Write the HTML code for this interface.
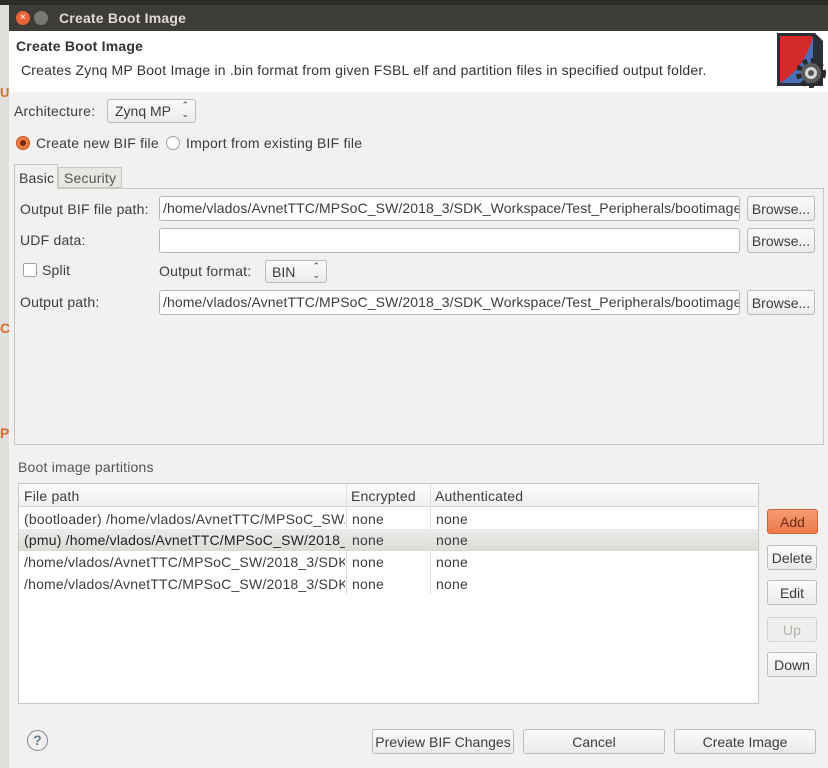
<!DOCTYPE html>
<html><head><meta charset="utf-8"><style>
*{box-sizing:border-box;margin:0;padding:0}
body{width:828px;height:768px;overflow:hidden;background:#f2f1f0;font-family:"Liberation Sans","DejaVu Sans",sans-serif;font-size:14px;letter-spacing:0.2px;color:#3c3c3c;position:relative}
.a{position:absolute;white-space:nowrap}
.btn{position:absolute;border:1px solid #bdbbb6;border-radius:3px;background:linear-gradient(#fbfbfa,#ecebe9);text-align:center;color:#3c3c3c;font-size:14px;letter-spacing:0}
.inp{position:absolute;background:#fff;border:1px solid #b8b6b2;border-radius:3px;padding:3px 3px;overflow:hidden;font-size:14px;letter-spacing:0.1px}
</style></head><body>
<div class="a" style="left:0;top:0;width:828px;height:5px;background:#2c2b28"></div>
<div class="a" style="left:0;top:5px;width:9px;height:763px;background:#e0dfdc"></div>
<div class="a" style="left:0;top:85px;width:9px;height:14px;color:#e06a2c;font-weight:bold;font-size:13px">U</div>
<div class="a" style="left:0;top:320px;width:9px;color:#e06a2c;font-weight:bold">C</div>
<div class="a" style="left:0;top:425px;width:9px;color:#e06a2c;font-weight:bold">P</div>
<div class="a" style="left:9px;top:5px;width:819px;height:26px;background:#3d3c38"></div>
<div class="a" style="left:16px;top:11px;width:14px;height:14px;border-radius:7px;background:#e8643a;color:#fff;font-size:10px;text-align:center;line-height:14px">×</div>
<div class="a" style="left:34px;top:11px;width:14px;height:14px;border-radius:7px;background:#7a7872"></div>
<div class="a" style="left:59px;top:10px;color:#dfdbd2;font-weight:bold;font-size:14px">Create Boot Image</div>
<div class="a" style="left:9px;top:31px;width:819px;height:61px;background:#fff"></div>
<div class="a" style="left:16px;top:38px;font-weight:bold;font-size:14px;color:#333">Create Boot Image</div>
<div class="a" style="left:21px;top:62px;color:#333">Creates Zynq MP Boot Image in .bin format from given FSBL elf and partition files in specified output folder.</div>
<svg class="a" style="left:776px;top:32px" width="52" height="56" viewBox="0 0 52 56">
<path d="M1 1h38l8 8v45H1z" fill="#2a3038"/>
<path d="M4 4h33v47H4z" fill="#d52a2a"/>
<path d="M37 4v47H4C22 40 33 22 37 4z" fill="#4a6fb8"/>
<circle cx="35" cy="41" r="12" fill="none" stroke="#2a2a2a" stroke-width="6" stroke-dasharray="4.5 3.5"/>
<circle cx="35" cy="41" r="10" fill="#5a5a5a"/>
<circle cx="35" cy="41" r="6" fill="#d8d8d8"/>
<circle cx="35" cy="41" r="3" fill="#555"/>
</svg>
<div class="a" style="left:14px;top:103px">Architecture:</div>
<div class="btn" style="left:107px;top:99px;width:89px;height:24px;text-align:left;padding:3px 7px">Zynq MP<span style="position:absolute;right:6px;top:1px;font-size:9px;line-height:9px">⌃<br>⌄</span></div>
<div class="a" style="left:16px;top:136px;width:14px;height:14px;border-radius:7px;border:1px solid #c2531f;background:#ef7d4a"><div style="margin:3px;width:6px;height:6px;border-radius:3px;background:#7a2a0a"></div></div>
<div class="a" style="left:36px;top:135px">Create new BIF file</div>
<div class="a" style="left:166px;top:136px;width:14px;height:14px;border-radius:7px;border:1px solid #a5a39f;background:#fff"></div>
<div class="a" style="left:186px;top:135px">Import from existing BIF file</div>
<div class="a" style="left:14px;top:188px;width:810px;height:257px;border:1px solid #c9c7c3;background:#f2f1f0"></div>
<div class="a" style="left:14px;top:164px;width:44px;height:25px;border:1px solid #c9c7c3;border-bottom:none;background:#f2f1f0;padding:5px 4px">Basic</div>
<div class="a" style="left:58px;top:167px;width:64px;height:21px;border:1px solid #c9c7c3;background:#e8e7e4;padding:2px 5px;color:#555">Security</div>
<div class="a" style="left:20px;top:201px">Output BIF file path:</div>
<div class="inp" style="left:159px;top:196px;width:581px;height:25px">/home/vlados/AvnetTTC/MPSoC_SW/2018_3/SDK_Workspace/Test_Peripherals/bootimage</div>
<div class="btn" style="left:747px;top:196px;width:68px;height:25px;padding-top:4px">Browse...</div>
<div class="a" style="left:20px;top:232px">UDF data:</div>
<div class="inp" style="left:159px;top:228px;width:581px;height:25px"></div>
<div class="btn" style="left:747px;top:228px;width:68px;height:25px;padding-top:4px">Browse...</div>
<div class="a" style="left:23px;top:263px;width:14px;height:14px;border:1px solid #a5a39f;border-radius:2px;background:#fff"></div>
<div class="a" style="left:42px;top:262px">Split</div>
<div class="a" style="left:159px;top:263px">Output format:</div>
<div class="btn" style="left:265px;top:260px;width:62px;height:23px;text-align:left;padding:3px 6px">BIN<span style="position:absolute;right:6px;top:1px;font-size:9px;line-height:9px">⌃<br>⌄</span></div>
<div class="a" style="left:20px;top:294px">Output path:</div>
<div class="inp" style="left:159px;top:290px;width:581px;height:25px">/home/vlados/AvnetTTC/MPSoC_SW/2018_3/SDK_Workspace/Test_Peripherals/bootimage</div>
<div class="btn" style="left:747px;top:290px;width:68px;height:25px;padding-top:4px">Browse...</div>
<div class="a" style="left:18px;top:459px;color:#555">Boot image partitions</div>
<div class="a" style="left:18px;top:483px;width:741px;height:221px;border:1px solid #c9c7c3;background:#fff"></div>
<div class="a" style="left:19px;top:484px;width:739px;height:23px;background:linear-gradient(#fdfdfd,#f0efed);border-bottom:1px solid #d6d4d0"></div>
<div class="a" style="left:346px;top:484px;width:1px;height:110px;background:#e0dedb"></div>
<div class="a" style="left:430px;top:484px;width:1px;height:110px;background:#e0dedb"></div>
<div class="a" style="left:24px;top:488px">File path</div>
<div class="a" style="left:351px;top:488px">Encrypted</div>
<div class="a" style="left:435px;top:488px">Authenticated</div>
<div class="a" style="left:19px;top:529px;width:739px;height:22px;background:linear-gradient(#ecebe9,#dcdbd8)"></div>
<div class="a" style="left:24px;top:511px;width:321px;overflow:hidden">(bootloader) /home/vlados/AvnetTTC/MPSoC_SW/2018_3</div>
<div class="a" style="left:24px;top:532px;width:321px;overflow:hidden;color:#222">(pmu) /home/vlados/AvnetTTC/MPSoC_SW/2018_3/SDK</div>
<div class="a" style="left:24px;top:554px;width:321px;overflow:hidden">/home/vlados/AvnetTTC/MPSoC_SW/2018_3/SDK_Workspace</div>
<div class="a" style="left:24px;top:576px;width:321px;overflow:hidden">/home/vlados/AvnetTTC/MPSoC_SW/2018_3/SDK_Workspace</div>
<div class="a" style="left:352px;top:511px">none</div><div class="a" style="left:436px;top:511px">none</div>
<div class="a" style="left:352px;top:532px">none</div><div class="a" style="left:436px;top:532px">none</div>
<div class="a" style="left:352px;top:554px">none</div><div class="a" style="left:436px;top:554px">none</div>
<div class="a" style="left:352px;top:576px">none</div><div class="a" style="left:436px;top:576px">none</div>
<div class="btn" style="left:767px;top:509px;width:51px;height:25px;padding-top:4px;background:linear-gradient(#f59a72,#ec7a4c);border-color:#d0673c;color:#6a2d14">Add</div>
<div class="btn" style="left:767px;top:545px;width:50px;height:25px;padding-top:4px">Delete</div>
<div class="btn" style="left:767px;top:580px;width:50px;height:25px;padding-top:4px">Edit</div>
<div class="btn" style="left:767px;top:617px;width:50px;height:25px;padding-top:4px;color:#b5b3af;background:#f0efed;border-color:#d6d4d0">Up</div>
<div class="btn" style="left:767px;top:652px;width:50px;height:25px;padding-top:4px">Down</div>
<div class="a" style="left:27px;top:730px;width:21px;height:21px;border-radius:11px;border:1.5px solid #7a8aa0;color:#6a7a90;text-align:center;font-size:14px;line-height:18px;font-weight:bold">?</div>
<div class="btn" style="left:372px;top:729px;width:142px;height:25px;padding-top:4px">Preview BIF Changes</div>
<div class="btn" style="left:523px;top:729px;width:142px;height:25px;padding-top:4px">Cancel</div>
<div class="btn" style="left:674px;top:729px;width:142px;height:25px;padding-top:4px">Create Image</div>
</body></html>
